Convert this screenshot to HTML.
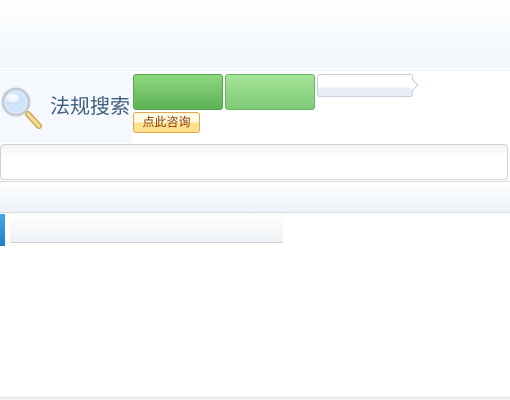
<!DOCTYPE html>
<html><head><meta charset="utf-8"><style>
*{margin:0;padding:0;box-sizing:border-box}
body{width:510px;height:400px;background:#fff;position:relative;overflow:hidden;font-family:"Liberation Sans","Noto Sans CJK SC",sans-serif}
.a{position:absolute}
</style></head><body>
<div class="a" style="left:0;top:0;width:510px;height:68px;background:linear-gradient(#fdfeff,#f2f7fc)"></div>
<div class="a" style="left:0;top:70px;width:510px;height:1px;background:#eef2f6"></div>
<div class="a" style="left:0;top:72px;width:132px;height:71px;background:#f5f8fc"></div>
<svg class="a" style="left:0;top:86px" width="46" height="46" viewBox="0 0 46 46">
<line x1="28" y1="28" x2="39" y2="40" stroke="#c9a04a" stroke-width="6" stroke-linecap="round"/>
<line x1="28" y1="28" x2="39" y2="40" stroke="#f6dc94" stroke-width="3.5" stroke-linecap="round"/>
<circle cx="16" cy="16" r="13" fill="#dfeeff" stroke="#c5ccd6" stroke-width="3"/>
<circle cx="16" cy="16" r="10" fill="#cfe4fb"/>
<ellipse cx="13" cy="12" rx="6" ry="4" fill="#f4f9ff"/>
</svg>
<div class="a" style="left:50px;top:93px;font-size:20px;color:#3f5f7f;line-height:28px">法规搜索</div>
<div class="a" style="left:133px;top:74px;width:90px;height:36px;border:1px solid #5aa44e;border-radius:3px;background:linear-gradient(#8ed87f,#5cb254)"></div>
<div class="a" style="left:225px;top:74px;width:90px;height:36px;border:1px solid #6bb463;border-radius:3px;background:linear-gradient(#a4e595,#80cb77)"></div>
<div class="a" style="left:317px;top:74px;width:96px;height:23px;border:1px solid #c7d0da;border-radius:3px;background:linear-gradient(#fff 60%,#e8edf5 60%)"></div>
<div class="a" style="left:409px;top:81px;width:8px;height:8px;border-right:1px solid #c7d0da;border-top:1px solid #c7d0da;background:#fff;transform:rotate(45deg)"></div>
<div class="a" style="left:133px;top:112px;width:67px;height:21px;border:1px solid #e0a84c;border-radius:3px;background:linear-gradient(#fff8e2 50%,#ffe08e 50%);font-size:12px;color:#8a3a00;text-align:center;line-height:19px">点此咨询</div>
<div class="a" style="left:0;top:144px;width:508px;height:36px;border:1px solid #cfd3d8;border-radius:4px;background:linear-gradient(#f4f4f4,#fff 40%)"></div>
<div class="a" style="left:0;top:181px;width:510px;height:32px;border-top:1px solid #d8dde3;border-bottom:1px solid #d8dde3;background:linear-gradient(#fdfeff,#eef2f7)"></div>
<div class="a" style="left:0;top:214px;width:5px;height:32px;background:linear-gradient(#4aa6e6,#1f7fc8)"></div>
<div class="a" style="left:10px;top:215px;width:273px;height:28px;border-bottom:1px solid #ccd3db;background:linear-gradient(#fff,#eef1f5)"></div>
<div class="a" style="left:0;top:397px;width:510px;height:3px;border-top:1px solid #e2e2e2;background:#f2f2f2"></div>
</body></html>
